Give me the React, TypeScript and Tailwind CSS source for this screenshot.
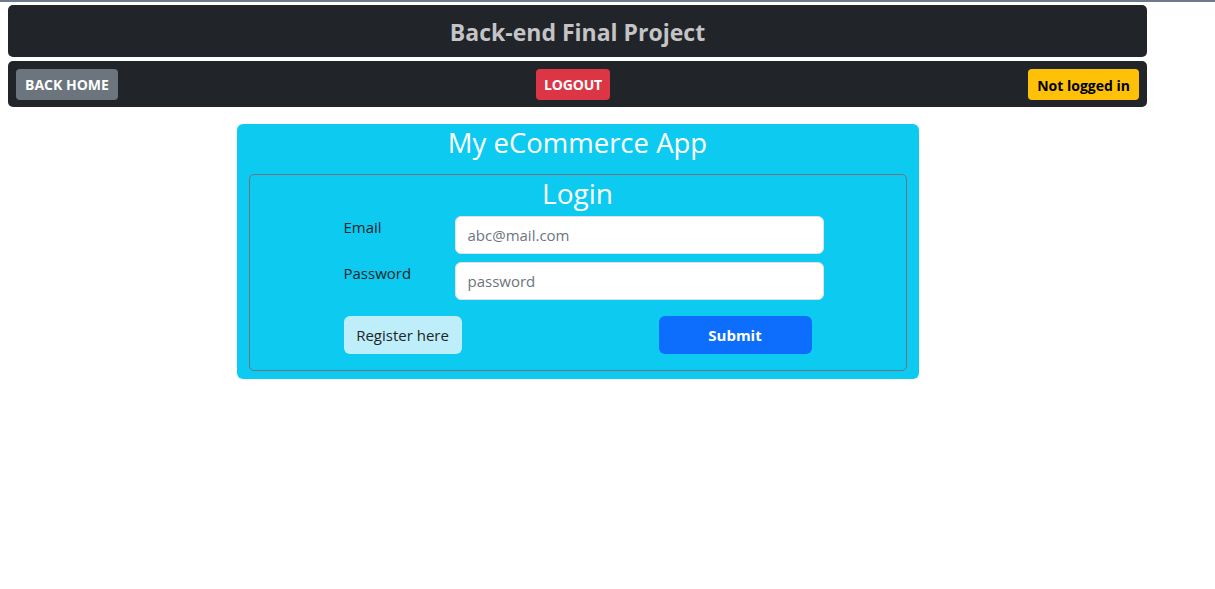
import { useState } from "react";

const App = () => {
  const [email, setEmail] = useState("")
  const [password, setPassword] = useState("")

  return (
    <div className="min-h-screen bg-white border-t-2 border-[#6c7a8c] font-['Open_Sans','Noto_Sans',sans-serif]">
      <div className="w-[1155px] flex flex-col">
        <div className="mx-2 mt-[3px] h-[52px] rounded-[5px] bg-[#212529] flex items-center justify-center">
          <h1 className="text-[23px] font-bold text-[#c4c4c6] pt-[3px]">Back-end Final Project</h1>
        </div>
        <div className="mx-2 mt-[4px] h-[46px] rounded-[5px] bg-[#212529] flex items-center justify-between px-2">
          <button className="h-[31px] px-[9px] rounded-[4px] bg-[#6c757d] text-white text-[14px] font-bold">BACK HOME</button>
          <button className="h-[31px] px-[8px] rounded-[4px] bg-[#dc3545] text-white text-[14px] font-bold tracking-[-0.2px]">LOGOUT</button>
          <span className="h-[31px] px-[9px] rounded-[4px] bg-[#ffc107] text-black text-[14px] font-bold flex items-center pt-[2px]">Not logged in</span>
        </div>

        <div className="mt-[17px] mx-auto w-[682px] h-[255px] rounded-[6px] bg-[#0dcaf0] px-3 flex flex-col">
          <h2 className="text-center text-white text-[27.5px] leading-[38px]">My eCommerce App</h2>
          <div className="mt-[12px] h-[197px] border border-[#6c757d] rounded-[5px] flex flex-col">
            <h3 className="text-center text-white text-[28px] leading-[36px]">Login</h3>
            <div className="w-[480px] ml-[94px] mt-[5px] flex flex-col gap-2">
              <label className="flex items-start">
                <span className="w-[111px] text-[15px] text-[#212529]">Email</span>
                <input
                  value={email}
                  onChange={(e) => setEmail(e.target.value)}
                  placeholder="abc@mail.com"
                  className="w-[369px] h-[38px] rounded-[6px] bg-white border border-[#dee2e6] px-3 text-[15px] text-[#212529] placeholder:text-[#6c757d] outline-none"
                />
              </label>
              <label className="flex items-start">
                <span className="w-[111px] text-[15px] text-[#212529]">Password</span>
                <input
                  type="password"
                  value={password}
                  onChange={(e) => setPassword(e.target.value)}
                  placeholder="password"
                  className="w-[369px] h-[38px] rounded-[6px] bg-white border border-[#dee2e6] px-3 text-[15px] text-[#212529] placeholder:text-[#6c757d] outline-none"
                />
              </label>
              <div className="mt-2 flex items-center">
                <button className="w-[118px] h-[38px] rounded-[6px] bg-[#bdeef9] text-[15px] text-[#212529]">Register here</button>
                <button className="ml-[197px] w-[153px] h-[38px] rounded-[6px] bg-[#0d6efd] text-[15px] font-bold text-white">Submit</button>
              </div>
            </div>
          </div>
        </div>
      </div>
    </div>
  );
};

export default App;
